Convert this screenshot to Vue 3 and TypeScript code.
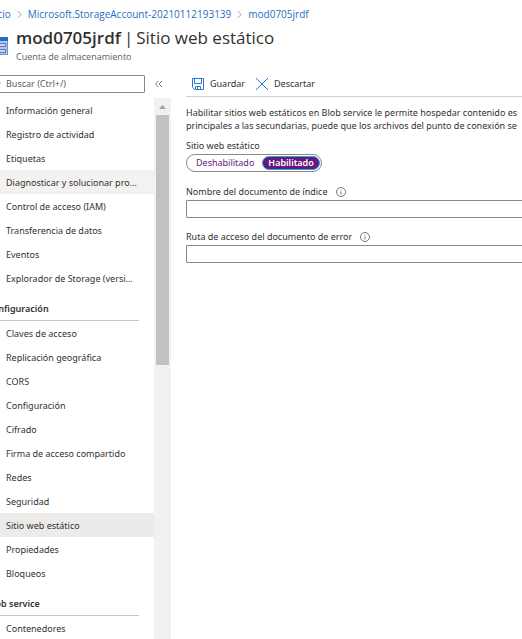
<script setup lang="ts">
import { ref } from 'vue'

interface MenuGroup {
  title?: string
  items: string[]
}

const groups: MenuGroup[] = [
  {
    items: [
      'Información general',
      'Registro de actividad',
      'Etiquetas',
      'Diagnosticar y solucionar problemas',
      'Control de acceso (IAM)',
      'Transferencia de datos',
      'Eventos',
      'Explorador de Storage (versión preliminar)',
    ],
  },
  {
    title: 'Configuración',
    items: [
      'Claves de acceso',
      'Replicación geográfica',
      'CORS',
      'Configuración',
      'Cifrado',
      'Firma de acceso compartido',
      'Redes',
      'Seguridad',
      'Sitio web estático',
      'Propiedades',
      'Bloqueos',
    ],
  },
  { title: 'Blob service', items: ['Contenedores'] },
]

const hovered = 'Diagnosticar y solucionar problemas'
const current = ref('Sitio web estático')
const search = ref('')
const enabled = ref('on')
const indexDocument = ref('')
const errorDocument = ref('')
</script>

<template>
  <div class="viewport">
    <div class="page">
      <nav class="crumbs" aria-label="Ruta de navegación">
        <a href="#">Inicio</a>
        <svg class="chevron" viewBox="0 0 6 10"><path d="M1 1l4 4-4 4" /></svg>
        <a href="#">Microsoft.StorageAccount-20210112193139</a>
        <svg class="chevron" viewBox="0 0 6 10"><path d="M1 1l4 4-4 4" /></svg>
        <a href="#">mod0705jrdf</a>
      </nav>

      <header class="heading">
        <svg class="resource" viewBox="0 0 22 18">
          <path fill="#a5cdf0" d="M0 3h22v15H0z" />
          <path fill="#1f6fc4" d="M0 0h22v4H0z" />
          <path fill="#7c6bb5" d="M2 6h18v4H2zM2 12h18v4H2z" />
          <path fill="#c3dcf5" d="M2 7h17v2H2zM2 13h17v2H2z" />
          <path fill="none" stroke="#5b9bdc" d="M.5 4v13.500h21V4" />
        </svg>
        <div>
          <h1><strong>mod0705jrdf</strong><span class="bar">|</span>Sitio web estático</h1>
          <p class="kind">Cuenta de almacenamiento</p>
        </div>
      </header>

      <div class="columns">
        <aside class="side">
          <div class="tools">
            <label class="search">
              <svg viewBox="0 0 10 10"><circle cx="5" cy="4" r="3" /><path d="M3 6L1 9" /></svg>
              <input v-model="search" type="text" placeholder="Buscar (Ctrl+/)" aria-label="Buscar" />
            </label>
            <button class="collapse" type="button" aria-label="Contraer menú">
              <svg viewBox="0 0 8 8"><path d="M3.500 1l-3 3 3 3M7 1L4 4l3 3" /></svg>
            </button>
          </div>
          <div class="scroller">
            <nav class="menu" aria-label="Menú del recurso">
              <section v-for="(group, i) in groups" :key="i">
                <h2 v-if="group.title">{{ group.title }}</h2>
                <a
                  v-for="item in group.items"
                  :key="item"
                  href="#"
                  :class="{ hovered: item === hovered, current: item === current }"
                  @click.prevent="current = item"
                ><span>{{ item }}</span></a>
              </section>
            </nav>
            <div class="track" aria-hidden="true">
              <svg class="arrow" viewBox="0 0 17 17"><path d="M5 11l3.500-4L12 11z" /></svg>
              <div class="thumb"></div>
            </div>
          </div>
        </aside>

        <main class="content">
          <div class="commands">
            <button type="button">
              <svg class="icon" viewBox="0 0 12 12">
                <path d="M.5.5h11v11h-9l-2-2zM2.500.5v5h7v-5M3.500 11.500v-3h5v3M5.500 9v2" />
              </svg>
              Guardar
            </button>
            <button type="button">
              <svg class="icon" viewBox="0 0 12 12"><path d="M0 0l12 12M12 0L0 12" /></svg>
              Descartar
            </button>
          </div>

          <form class="form" @submit.prevent>
            <div class="intro">
              <p>Habilitar sitios web estáticos en Blob service le permite hospedar contenido es</p>
              <p>principales a las secundarias, puede que los archivos del punto de conexión se</p>
            </div>
            <fieldset>
              <legend>Sitio web estático</legend>
              <div class="switch">
                <label><input v-model="enabled" type="radio" name="site" value="off" /><span>Deshabilitado</span></label>
                <label><input v-model="enabled" type="radio" name="site" value="on" /><span>Habilitado</span></label>
              </div>
            </fieldset>
            <div class="field">
              <label for="index-doc">Nombre del documento de índice
                <svg class="info" viewBox="0 0 10 10"><circle cx="5" cy="5" r="4.500" /><path d="M5 4.500v3M5 2.500v1" /></svg>
              </label>
              <input id="index-doc" v-model="indexDocument" type="text" />
            </div>
            <div class="field">
              <label for="error-doc">Ruta de acceso del documento de error
                <svg class="info" viewBox="0 0 10 10"><circle cx="5" cy="5" r="4.500" /><path d="M5 4.500v3M5 2.500v1" /></svg>
              </label>
              <input id="error-doc" v-model="errorDocument" type="text" />
            </div>
          </form>
        </main>
      </div>
    </div>
  </div>
</template>

<style>
html,
body {
  margin: 0;
  background: #fff;
}
</style>

<style scoped>
.viewport {
  height: 100vh;
  overflow: hidden;
  color: #323130;
  font: 9px/12px 'Noto Sans', 'Open Sans', sans-serif;
}
.viewport *,
.viewport *::before {
  box-sizing: border-box;
}
.page {
  display: flex;
  flex-direction: column;
  height: 100%;
  margin-left: -14px;
}
a {
  color: inherit;
  text-decoration: none;
}
button,
input {
  font: inherit;
  color: inherit;
}
button {
  border: 0;
  padding: 0;
  background: none;
}
p,
h1,
h2 {
  margin: 0;
}
svg {
  flex: none;
  fill: none;
}
.crumbs,
.heading {
  font-family: 'Open Sans', 'Noto Sans', sans-serif;
}
.crumbs {
  display: flex;
  align-items: center;
  gap: 6px;
  height: 28px;
  color: #2b6cc4;
  font-size: 10px;
  white-space: nowrap;
}
.chevron {
  width: 5px;
  height: 9px;
  stroke: #8a8886;
}
.heading {
  display: flex;
  gap: 8px;
  height: 44px;
}
.resource {
  width: 22px;
  height: 18px;
  margin-top: 9px;
}
h1 {
  font-size: 17px;
  font-weight: 400;
  line-height: 20px;
  white-space: nowrap;
}
h1 strong {
  font-weight: 600;
}
.bar {
  margin: 0 3px;
}
.kind {
  margin-top: 3px;
  color: #605e5c;
}
.columns {
  display: flex;
  flex: 1;
  min-height: 0;
}
.side {
  display: flex;
  flex-direction: column;
  flex: none;
  width: 185px;
}
.tools {
  display: flex;
  align-items: center;
  gap: 10px;
  height: 26px;
  padding: 2px 0 4px;
}
.search {
  display: flex;
  align-items: center;
  gap: 4px;
  width: 159px;
  height: 18px;
  padding-left: 5px;
  border: 1px solid #8a8886;
  border-radius: 1px;
}
.search svg {
  width: 10px;
  height: 10px;
  stroke: #2b7cd3;
}
.search input {
  flex: 1;
  min-width: 0;
  border: 0;
  padding: 0;
  outline: 0;
}
.search input::placeholder {
  color: #605e5c;
  opacity: 1;
}
.collapse svg {
  display: block;
  width: 8px;
  height: 8px;
  stroke: #797775;
}
.scroller {
  display: flex;
  flex: 1;
  min-height: 0;
}
.menu {
  flex: 1;
  min-width: 0;
  overflow: hidden;
}
.menu a {
  display: flex;
  align-items: center;
  height: 24px;
  padding: 1px 16px 0 20px;
}
.menu a span {
  flex: 1;
  overflow: hidden;
  text-overflow: ellipsis;
  white-space: nowrap;
}
.menu .hovered {
  background: #f3f2f1;
}
.menu .current {
  background: #edebe9;
}
.menu h2 {
  height: 31px;
  margin-right: 15px;
  padding: 13px 0 0 1px;
  border-bottom: 1px solid #c8c6c4;
  font-size: 9px;
  font-weight: 600;
  line-height: 12px;
}
.track {
  flex: none;
  width: 17px;
  background: #f1f1f1;
}
.arrow {
  display: block;
  width: 17px;
  height: 17px;
  fill: #a3a3a3;
}
.thumb {
  height: 48%;
  max-height: 250px;
  margin: 0 2px;
  background: #c1c1c1;
}
.content {
  flex: 1;
  min-width: 0;
  overflow: hidden;
  padding-left: 15px;
}
.commands {
  display: flex;
  align-items: center;
  gap: 11px;
  height: 25px;
  padding: 0 6px 1px;
  border-bottom: 1px solid #d2d0ce;
}
.commands button {
  display: flex;
  align-items: center;
  gap: 6px;
}
.icon {
  width: 12px;
  height: 12px;
  stroke: #2b7cd3;
}
.form {
  padding-top: 9px;
}
.intro {
  line-height: 13px;
  white-space: nowrap;
}
fieldset {
  min-width: 0;
  margin: 8px 0 0;
  border: 0;
  padding: 0;
}
legend {
  padding: 0;
}
.switch {
  display: inline-flex;
  height: 18px;
  margin-top: 2px;
  padding: 1px;
  border: 1px solid #8a8886;
  border-radius: 9px;
}
.switch label {
  display: flex;
  position: relative;
}
.switch input {
  position: absolute;
  margin: 0;
  opacity: 0;
}
.switch span {
  height: 14px;
  padding: 0 7px;
  border: 1px solid transparent;
  border-radius: 7px;
  color: #68217a;
  line-height: 12px;
}
.switch label + label span {
  padding: 0 5px;
}
.switch input:checked + span {
  border-color: #1eaaf1;
  background: #68177a;
  color: #fff;
  font-weight: 600;
}
.field {
  margin-top: 13px;
}
.field label {
  display: flex;
  align-items: center;
  gap: 8px;
}
.field input {
  display: block;
  width: calc(100% + 10px);
  height: 18px;
  margin-top: 2px;
  border: 1px solid #8a8886;
  border-radius: 1px;
  padding: 0 6px;
}
fieldset + .field {
  margin-top: 14px;
}
.info {
  width: 10px;
  height: 10px;
  stroke: #797775;
}
</style>
